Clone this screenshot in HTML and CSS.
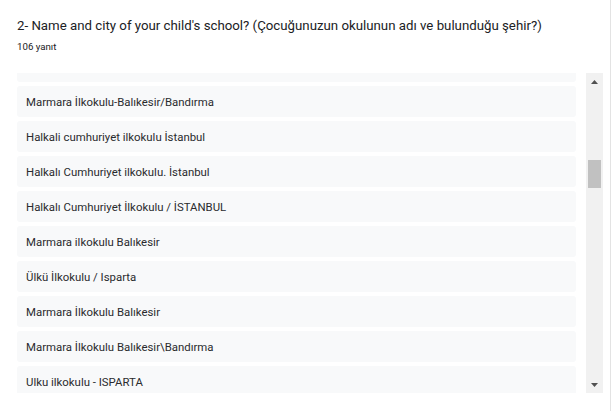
FILE: index.html
```html
<!DOCTYPE html>
<html lang="tr">
<head>
<meta charset="utf-8">
<link rel="stylesheet" href="styles.css">
</head>
<body>
<div class="card">
  <div class="header">
    <div class="title">2- Name and city of your child's school? (Çocuğunuzun okulunun adı ve bulunduğu şehir?)</div>
    <div class="count">106 yanıt</div>
  </div>
  <div class="answers">
    <div class="viewport">
      <div class="list">
        <div class="item"></div>
        <div class="item">Marmara İlkokulu-Balıkesir/Bandırma</div>
        <div class="item">Halkali cumhuriyet ilkokulu İstanbul</div>
        <div class="item">Halkalı Cumhuriyet ilkokulu. İstanbul</div>
        <div class="item">Halkalı Cumhuriyet İlkokulu / İSTANBUL</div>
        <div class="item">Marmara ilkokulu Balıkesir</div>
        <div class="item">Ülkü İlkokulu / Isparta</div>
        <div class="item">Marmara İlkokulu Balıkesir</div>
        <div class="item">Marmara İlkokulu Balıkesir\Bandırma</div>
        <div class="item">Ulku ilkokulu - ISPARTA</div>
      </div>
    </div>
    <div class="scrollbar">
      <div class="arrow">
        <svg width="7" height="4" viewBox="0 0 7 4"><polygon points="0,4 7,4 3.5,0" fill="#505050"/></svg>
      </div>
      <div class="track">
        <div class="thumb"></div>
      </div>
      <div class="arrow">
        <svg width="7" height="4" viewBox="0 0 7 4"><polygon points="0,0 7,0 3.5,4" fill="#505050"/></svg>
      </div>
    </div>
  </div>
</div>
</body>
</html>
```
FILE: styles.css
```css
html, body {
  margin: 0;
  padding: 0;
  background: #ffffff;
}
body {
  font-family: Roboto, "Liberation Sans", Arial, sans-serif;
  color: #202124;
}
.card {
  width: 610px;
  height: 411px;
  border-right: 1px solid #e3e3e3;
  box-sizing: content-box;
  background: #fff;
  overflow: hidden;
}
.header {
  padding: 17px 0 0 17px;
}
.title {
  font-size: 13.25px;
  line-height: 18px;
  color: #202124;
}
.count {
  margin-top: 6px;
  font-size: 9.7px;
  line-height: 12px;
  color: #202124;
}
.answers {
  margin-top: 20px;
  display: flex;
  align-items: flex-start;
  padding-left: 17px;
}
.viewport {
  width: 559px;
  height: 320px;
  overflow: hidden;
}
.list {
  margin-top: -22px;
  display: flex;
  flex-direction: column;
  gap: 4px;
}
.item {
  height: 31px;
  flex: none;
  display: flex;
  align-items: center;
  padding-left: 9px;
  background: #f8f9fa;
  border-radius: 3px;
  font-size: 11.4px;
  color: #2a2b2e;
}
.scrollbar {
  margin-left: 10px;
  width: 17px;
  height: 320px;
  background: #f1f1f1;
  display: flex;
  flex-direction: column;
}
.arrow {
  height: 17px;
  display: flex;
  align-items: center;
  justify-content: center;
  flex: none;
}
.track {
  flex: 1;
  padding: 0 2px;
}
.thumb {
  margin-top: 70px;
  height: 28px;
  background: #c1c1c1;
}
```
